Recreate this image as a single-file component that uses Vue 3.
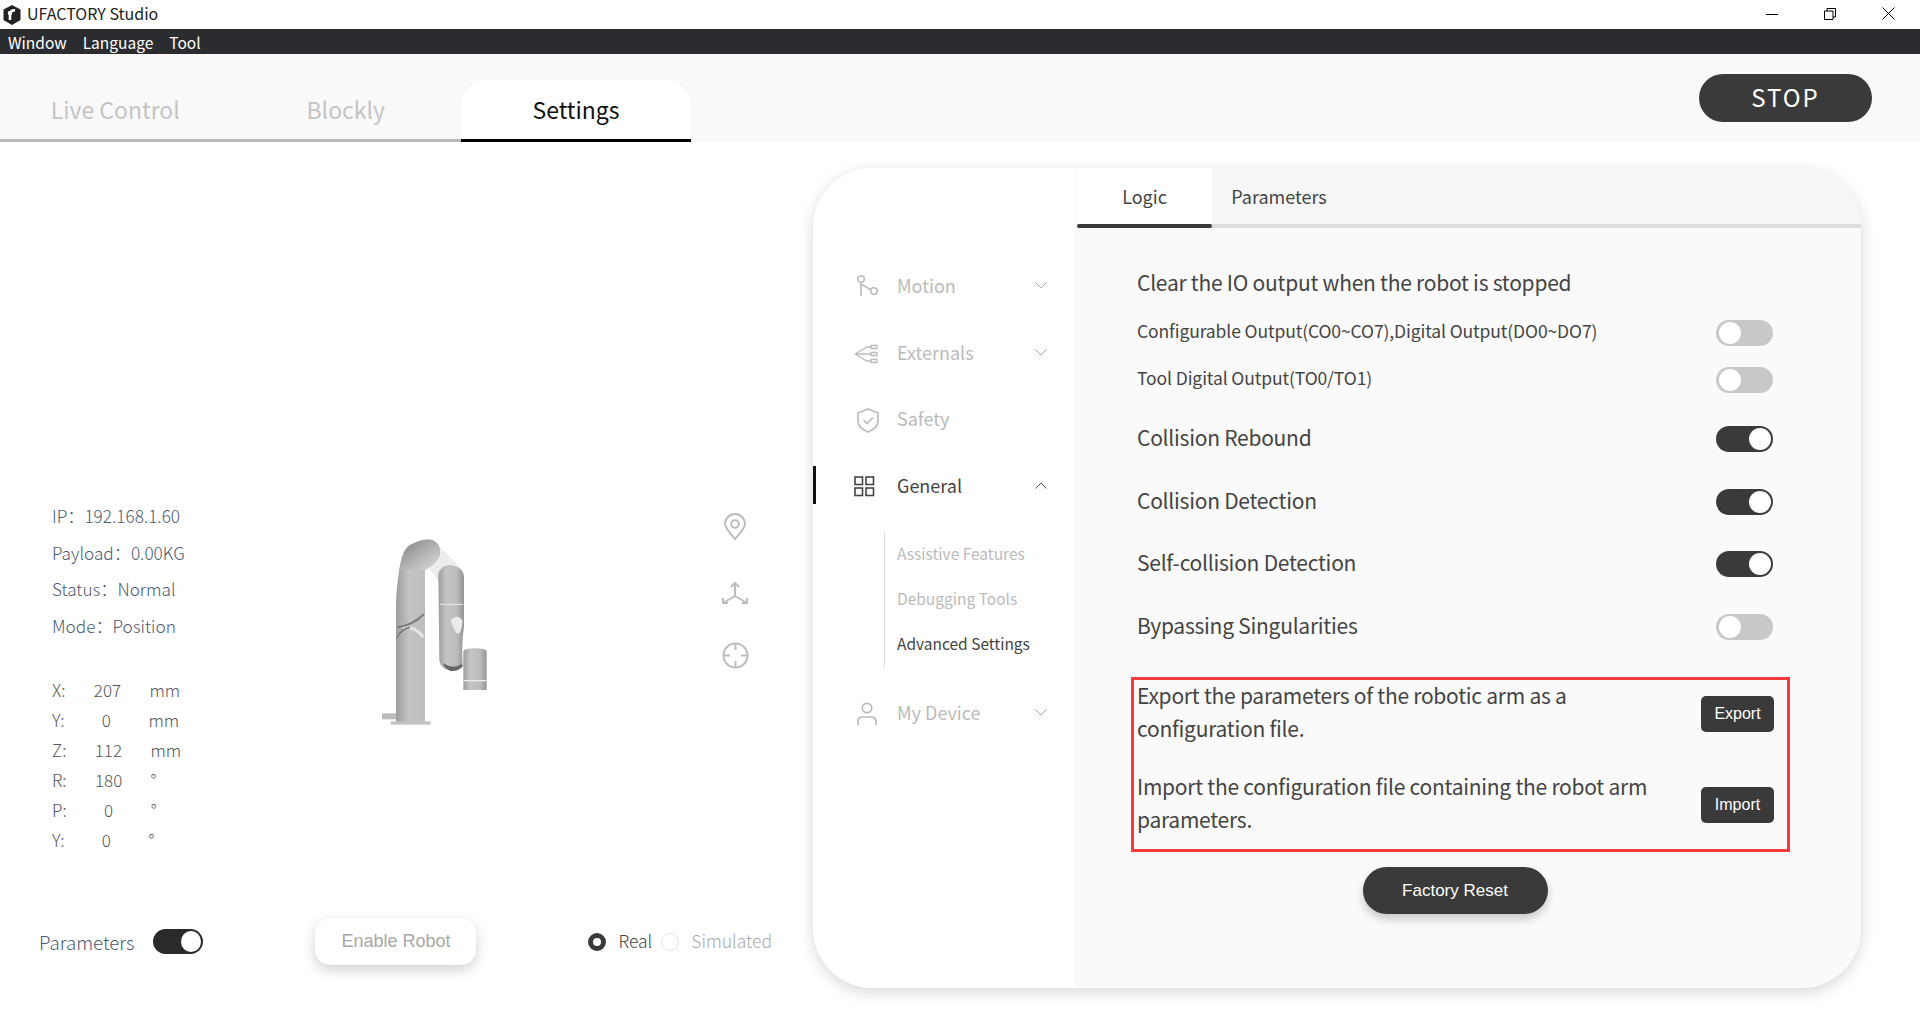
<script setup>
const info = ['IP：192.168.1.60', 'Payload：0.00KG', 'Status：Normal', 'Mode：Position']
const coords = [
  ['X:', '207', 'mm'], ['Y:', '0', 'mm'], ['Z:', '112', 'mm'],
  ['R:', '180', '°'], ['P:', '0', '°'], ['Y:', '0', '°']
]
const rows = [
  { label: 'Collision Rebound', on: true },
  { label: 'Collision Detection', on: true },
  { label: 'Self-collision Detection', on: true },
  { label: 'Bypassing Singularities', on: false }
]
</script>

<template>
  <div class="app">
    <div class="titlebar">
      <svg class="logo" viewBox="0 0 18 20" width="18" height="20">
        <path d="M9 0 17.500 4.500V15L9 20 .5 15V4.500Z" fill="#222" />
        <path d="M7 15V9.500C7 6.500 9 5 12 5.500" fill="none" stroke="#fff" stroke-width="2.600" />
        <circle cx="7" cy="8" r="2.200" fill="#fff" />
      </svg>
      <span class="app-name">UFACTORY Studio</span>
      <div class="win-controls">
        <svg width="12" height="12" viewBox="0 0 12 12"><path d="M0 6.500H12" stroke="#000" stroke-width="1" /></svg>
        <svg width="12" height="12" viewBox="0 0 12 12"><path d="M.5 3h8.500v8.500H.5ZM3 3V.5h8.500V9H9" fill="none" stroke="#000" stroke-width="1" /></svg>
        <svg width="13" height="13" viewBox="0 0 13 13"><path d="M.5.5 12.500 12.500M12.500.5.5 12.500" stroke="#000" stroke-width="1" /></svg>
      </div>
    </div>
    <div class="menubar"><span>Window</span><span>Language</span><span>Tool</span></div>
    <header class="tabsbar">
      <div class="tab">Live Control</div>
      <div class="tab">Blockly</div>
      <div class="tab active">Settings</div>
      <div class="stop">STOP</div>
    </header>

    <main class="main">
      <section class="left">
        <div class="stage">
          <div class="readout">
            <div v-for="t in info" :key="t" class="info-line">{{ t }}</div>
            <div class="coords">
              <div v-for="(c, i) in coords" :key="i" class="coord">
                <span>{{ c[0] }}</span><span class="val">{{ c[1] }}</span><span>{{ c[2] }}</span>
              </div>
            </div>
          </div>
          <svg class="robot" width="120" height="200" viewBox="0 0 360 600">
            <defs>
              <linearGradient id="g1" x1="0" x2="1" y1="0" y2="0">
                <stop offset="0" stop-color="#9d9d9d" /><stop offset=".3" stop-color="#c4c4c4" />
                <stop offset=".7" stop-color="#bdbdbd" /><stop offset="1" stop-color="#949494" />
              </linearGradient>
              <linearGradient id="g2" x1="0" x2="1" y1="0" y2="1">
                <stop offset="0" stop-color="#7f7f7f" /><stop offset=".55" stop-color="#b5b5b5" />
                <stop offset="1" stop-color="#dcdcdc" />
              </linearGradient>
              <filter id="soft"><feGaussianBlur stdDeviation="2" /></filter>
            </defs>
            <g transform="translate(-60 -60)" filter="url(#soft)">
              <path d="M205 175 240 110 300 170 240 215Z" fill="#ececec" />
              <rect x="66" y="610" width="42" height="18" fill="#bbb" />
              <path d="M108 640V280Q112 170 135 125Q165 88 208 88Q242 95 240 132Q232 160 195 180V640Z" fill="url(#g1)" />
              <path d="M118 180Q125 120 150 105Q185 85 215 90Q242 98 240 132Q232 160 195 180H118Z" fill="url(#g2)" />
              <path d="M128 352Q165 348 190 382" fill="none" stroke="#e4e4e4" stroke-width="10" />
              <path d="M112 352Q160 345 192 312" fill="none" stroke="#7d7d7d" stroke-width="6" />
              <path d="M110 385Q125 355 150 352" fill="none" stroke="#7d7d7d" stroke-width="5" />
              <rect x="92" y="634" width="120" height="10" fill="#c4c4c4" />
              <path d="M235 195Q240 165 270 165Q310 170 312 200V350Q304 400 308 468Q290 486 270 482Q240 475 238 450Z" fill="url(#g1)" />
              <path d="M240 283H310" stroke="#e8e8e8" stroke-width="3" />
              <path d="M272 330Q292 310 308 332Q304 372 292 372Q276 352 272 330Z" fill="#eaeaea" />
              <path d="M250 460Q280 480 305 462L308 470Q290 486 270 482Q252 476 250 460Z" fill="#666" />
              <path d="M310 425Q312 415 345 415Q378 415 380 425V540H310Z" fill="url(#g1)" />
              <rect x="310" y="510" width="70" height="4" fill="#ececec" />
            </g>
          </svg>
          <div class="view-icons">
            <svg width="24" height="28" viewBox="0 0 24 28" fill="none" stroke="#bdbdbd" stroke-width="2">
              <path d="M12 26C6 19 2 15 2 11A10 10 0 0 1 22 11C22 15 18 19 12 26Z" /><circle cx="12" cy="11" r="3.800" />
            </svg>
            <svg width="28" height="28" viewBox="0 0 28 28" fill="none" stroke="#bdbdbd" stroke-width="2">
              <path d="M14 15V2M10 6 14 2 18 6M14 15 2 22M2 17V22H7M14 15 26 22M26 17V22H21" />
            </svg>
            <svg width="27" height="27" viewBox="0 0 27 27" fill="none" stroke="#bdbdbd" stroke-width="2">
              <circle cx="13.500" cy="13.500" r="12" /><path d="M13.500 1V8M13.500 19V26M1 13.500H8M19 13.500H26" />
            </svg>
          </div>
        </div>
        <div class="controls">
          <span class="param-label">Parameters</span>
          <span class="switch small on"><i></i></span>
          <button class="enable">Enable Robot</button>
          <span class="radio checked"></span><span class="radio-text real">Real</span>
          <span class="radio"></span><span class="radio-text sim">Simulated</span>
        </div>
      </section>

      <section class="card">
        <nav class="side">
          <div class="item">
            <svg class="ico" width="28" height="28" viewBox="0 0 28 28" fill="none" stroke="#bbb" stroke-width="1.600">
              <circle cx="8" cy="6" r="3.300" /><circle cx="21" cy="18" r="3.300" /><path d="M8 9.500V23M8 11 18 17" />
            </svg>
            <span class="lbl">Motion</span>
            <svg class="chev" width="12" height="7" viewBox="0 0 12 7"><path d="M.5.5 6 6 11.500.5" fill="none" stroke="#aaa" /></svg>
          </div>
          <div class="item">
            <svg class="ico" width="28" height="28" viewBox="0 0 28 28" fill="none" stroke="#bbb" stroke-width="1.300">
              <path d="M2 14H18M2 14 14 7H18M2 14 14 21H18M18 5.500h6v3h-6ZM18 12.500h6v3h-6ZM18 19.500h6v3h-6Z" />
            </svg>
            <span class="lbl">Externals</span>
            <svg class="chev" width="12" height="7" viewBox="0 0 12 7"><path d="M.5.5 6 6 11.500.5" fill="none" stroke="#aaa" /></svg>
          </div>
          <div class="item">
            <svg class="ico" width="28" height="28" viewBox="0 0 28 28" fill="none" stroke="#bbb" stroke-width="1.700">
              <path d="M15 3 25 7V15C25 20 20 24 15 26 10 24 5 20 5 15V7Z" /><path d="M10.500 14 14 17.500 20 11.500" />
            </svg>
            <span class="lbl">Safety</span>
          </div>
          <div class="item current">
            <svg class="ico" width="28" height="28" viewBox="0 0 28 28" fill="none" stroke="#444" stroke-width="1.600">
              <rect x="2" y="4" width="7.500" height="7.500" /><rect x="13" y="4" width="7.500" height="7.500" />
              <rect x="2" y="15" width="7.500" height="7.500" /><rect x="13" y="15" width="7.500" height="7.500" />
            </svg>
            <span class="lbl">General</span>
            <svg class="chev" width="12" height="7" viewBox="0 0 12 7"><path d="M.5 6.500 6 1 11.500 6.500" fill="none" stroke="#555" /></svg>
          </div>
          <div class="sub">
            <div>Assistive Features</div>
            <div>Debugging Tools</div>
            <div class="sel">Advanced Settings</div>
          </div>
          <div class="item">
            <svg class="ico" width="28" height="28" viewBox="0 0 28 28" fill="none" stroke="#bbb" stroke-width="1.700">
              <circle cx="14" cy="8" r="4.700" /><path d="M5 25V21.500Q5 17 10 17H18Q23 17 23 21.500V25" />
            </svg>
            <span class="lbl">My Device</span>
            <svg class="chev" width="12" height="7" viewBox="0 0 12 7"><path d="M.5.5 6 6 11.500.5" fill="none" stroke="#aaa" /></svg>
          </div>
        </nav>

        <div class="panel">
          <div class="ptabs">
            <div class="ptab on">Logic</div>
            <div class="ptab">Parameters</div>
          </div>
          <div class="pbody">
            <div class="title-row">Clear the IO output when the robot is stopped</div>
            <div class="row sm"><span class="rtxt">Configurable Output(CO0~CO7),Digital Output(DO0~DO7)</span><span class="switch"><i></i></span></div>
            <div class="row sm"><span class="rtxt">Tool Digital Output(TO0/TO1)</span><span class="switch"><i></i></span></div>
            <div v-for="r in rows" :key="r.label" class="row lg">
              <span class="rtxt">{{ r.label }}</span><span class="switch" :class="{ on: r.on }"><i></i></span>
            </div>
            <div class="redbox">
              <div class="io-row">
                <p>Export the parameters of the robotic arm as a configuration file.</p>
                <button class="mini">Export</button>
              </div>
              <div class="io-row">
                <p>Import the configuration file containing the robot arm parameters.</p>
                <button class="mini">Import</button>
              </div>
            </div>
            <button class="reset">Factory Reset</button>
          </div>
        </div>
      </section>
    </main>
  </div>
</template>

<style>
html, body { margin: 0; background: #fff; overflow: hidden; }
</style>

<style scoped>
.app {
  width: 1920px; height: 1010px; display: flex; flex-direction: column; overflow: hidden;
  font-family: "Noto Sans CJK SC", "Noto Sans", sans-serif; background: #fff; color: #333;
}
.titlebar { height: 29px; display: flex; align-items: center; padding-left: 3px; box-sizing: border-box; background: #fff; }
.logo { margin-right: 6px; }
.app-name { font-size: 16px; color: #222; margin-top: -3px; }
.win-controls { margin-left: auto; display: flex; align-items: center; gap: 46px; padding-right: 25px; margin-top: -2px; }
.menubar {
  height: 25px; background: #2b2c30; color: #fff; font-size: 15.500px; display: flex; align-items: center;
  gap: 16px; padding-left: 8px;
}
.tabsbar { height: 88px; box-sizing: border-box; background: #f9f9f9; display: flex; align-items: flex-end; }
.tab {
  width: 230.500px; height: 62px; box-sizing: border-box; display: flex; align-items: center; justify-content: center;
  font-size: 23px; color: #c4c4c4; border-bottom: 3px solid #b9b9b9; line-height: 53px;
}
.tab.active { background: #fff; color: #111; border-radius: 26px 26px 0 0; border-bottom-color: #000; width: 230px; }
.stop {
  margin-left: auto; margin-right: 48px; margin-bottom: 20px; width: 173px; height: 48px; border-radius: 24px;
  background: #3a3a3a; color: #fff; font-size: 24px; letter-spacing: 2px; display: flex; align-items: center; justify-content: center; line-height: 44px; padding-bottom: 2px; box-sizing: border-box;
}
.main { flex: 1; display: flex; min-height: 0; }
.left { width: 813px; flex: none; display: flex; flex-direction: column; }
.stage { display: flex; align-items: flex-start; padding: 356px 0 0 52px; height: 776px; box-sizing: border-box; }
.readout { width: 328px; flex: none; }
.info-line { height: 36.700px; line-height: 36.700px; font-size: 17.200px; color: #4c5a70; font-weight: 300; }
.coords { margin-top: 30px; }
.coord { display: flex; height: 30px; align-items: center; font-size: 17px; color: #555; font-weight: 300; }
.val { width: 84px; text-align: center; }
.robot { margin-top: 32px; flex: none; }
.view-icons { margin-left: 220px; margin-top: 15px; width: 30px; display: flex; flex-direction: column; align-items: center; gap: 40px; }
.view-icons svg:nth-child(3) { margin-top: -7px; }
.controls { display: flex; align-items: center; padding-left: 39px; height: 47px; }
.param-label { font-size: 18.700px; color: #4c5a70; font-weight: 300; }
.enable {
  margin-left: 112px; margin-right: 112px; width: 161px; height: 47px; border: 0; background: #fff; border-radius: 15px; box-shadow: 0 5px 14px rgba(0,0,0,.18);
  font: 18px "Liberation Sans", Arial, sans-serif; color: #a8a8a8;
}
.radio { width: 18px; height: 18px; border-radius: 50%; border: 1px solid #e2e2ea; box-sizing: border-box; flex: none; background: #fff; }
.radio.checked { border: 5.500px solid #3a3a3a; }
.radio-text { font-size: 17.500px; font-weight: 300; padding-bottom: 3px; }
.real { color: #444; margin: 0 9px 0 12px; }
.sim { color: #aaa; margin-left: 12px; }

.switch {
  width: 57px; height: 26px; border-radius: 13px; background: #c8c8c8; display: flex; align-items: center; padding-left: 3px; box-sizing: border-box; flex: none;
}
.switch i { width: 22px; height: 22px; border-radius: 50%; background: #fff; display: block; }
.switch.on { background: #3a3a3a; justify-content: flex-end; padding: 0 2px 0 0; }
.switch.small { width: 50px; height: 25px; margin-left: 19px; background: #2a2a2a; }
.switch.small i { width: 20px; height: 21px; }

.card {
  width: 1048px; height: 820px; margin-top: 26px; border-radius: 60px; overflow: hidden; display: flex; background: #fff;
  box-shadow: 0 4px 16px rgba(0,0,0,.16);
}
.side { width: 262px; flex: none; background: #fff; padding-top: 86px; box-sizing: border-box; }
.item { height: 66.500px; display: flex; align-items: center; padding-left: 40px; font-size: 18px; color: #bbb; position: relative; }
.lbl { margin-top: -4px; }
.ico { margin-right: 16px; flex: none; }
.chev { margin-left: auto; margin-right: 28px; margin-top: -3px; }
.item.current { color: #444; }
.item.current::before { content: ""; position: absolute; left: 0; top: 12px; width: 3px; height: 38px; background: #111; }
.sub { margin: 12px 0 14px 71px; border-left: 1px solid #ddd; padding-left: 12px; font-size: 15.500px; color: #bbb; }
.sub div { height: 45px; line-height: 43px; }
.sub .sel { color: #444; }

.panel { flex: 1; background: #fafafa; min-width: 0; }
.ptabs { height: 60px; margin-left: 2px; box-sizing: border-box; border-bottom: 4px solid #ddd; background: #f6f6f6; display: flex; font-size: 18px; color: #444; }
.ptab { width: 134px; height: 56px; box-sizing: border-box; display: flex; align-items: center; justify-content: center; position: relative; }
.ptab.on { background: #fff; width: 135px; }
.ptab.on::after { content: ""; position: absolute; left: 0; right: 0; bottom: -4px; height: 4px; background: #3a3a3a; border-radius: 2px; }
.pbody { padding: 31px 88px 0 62px; display: flex; flex-direction: column; color: #444; }
.title-row { height: 50px; line-height: 47px; font-size: 21px; letter-spacing: -.25px; }
.row { display: flex; align-items: center; justify-content: space-between; }
.rtxt { margin-top: -4px; }
.row.sm { height: 47px; font-size: 17.500px; letter-spacing: -.11px; }
.row.lg { height: 62.500px; font-size: 21px; letter-spacing: -.25px; }
.row.sm:nth-child(3) { margin-bottom: 5px; }
.redbox { margin: 19px -17px 0 -6px; border: 3px solid #f33b3b; padding: 1px 13px 11px 3px; }
.io-row { display: flex; align-items: center; justify-content: space-between; }
.io-row + .io-row { margin-top: 25px; }
.io-row p { margin: -2px 0 2px; width: 540px; font-size: 21px; letter-spacing: -.25px; line-height: 33px; }
.mini { width: 73px; height: 36px; border: 0; border-radius: 5px; background: #3a3a3a; color: #fff; font: 16px "Liberation Sans", Arial, sans-serif; }
.reset {
  align-self: center; margin-top: 15px; width: 185px; height: 47px; border: 0; border-radius: 24px; background: #3a3a3a; color: #fff;
  font: 17px "Liberation Sans", Arial, sans-serif; box-shadow: 0 5px 10px rgba(0,0,0,.2);
}
</style>
